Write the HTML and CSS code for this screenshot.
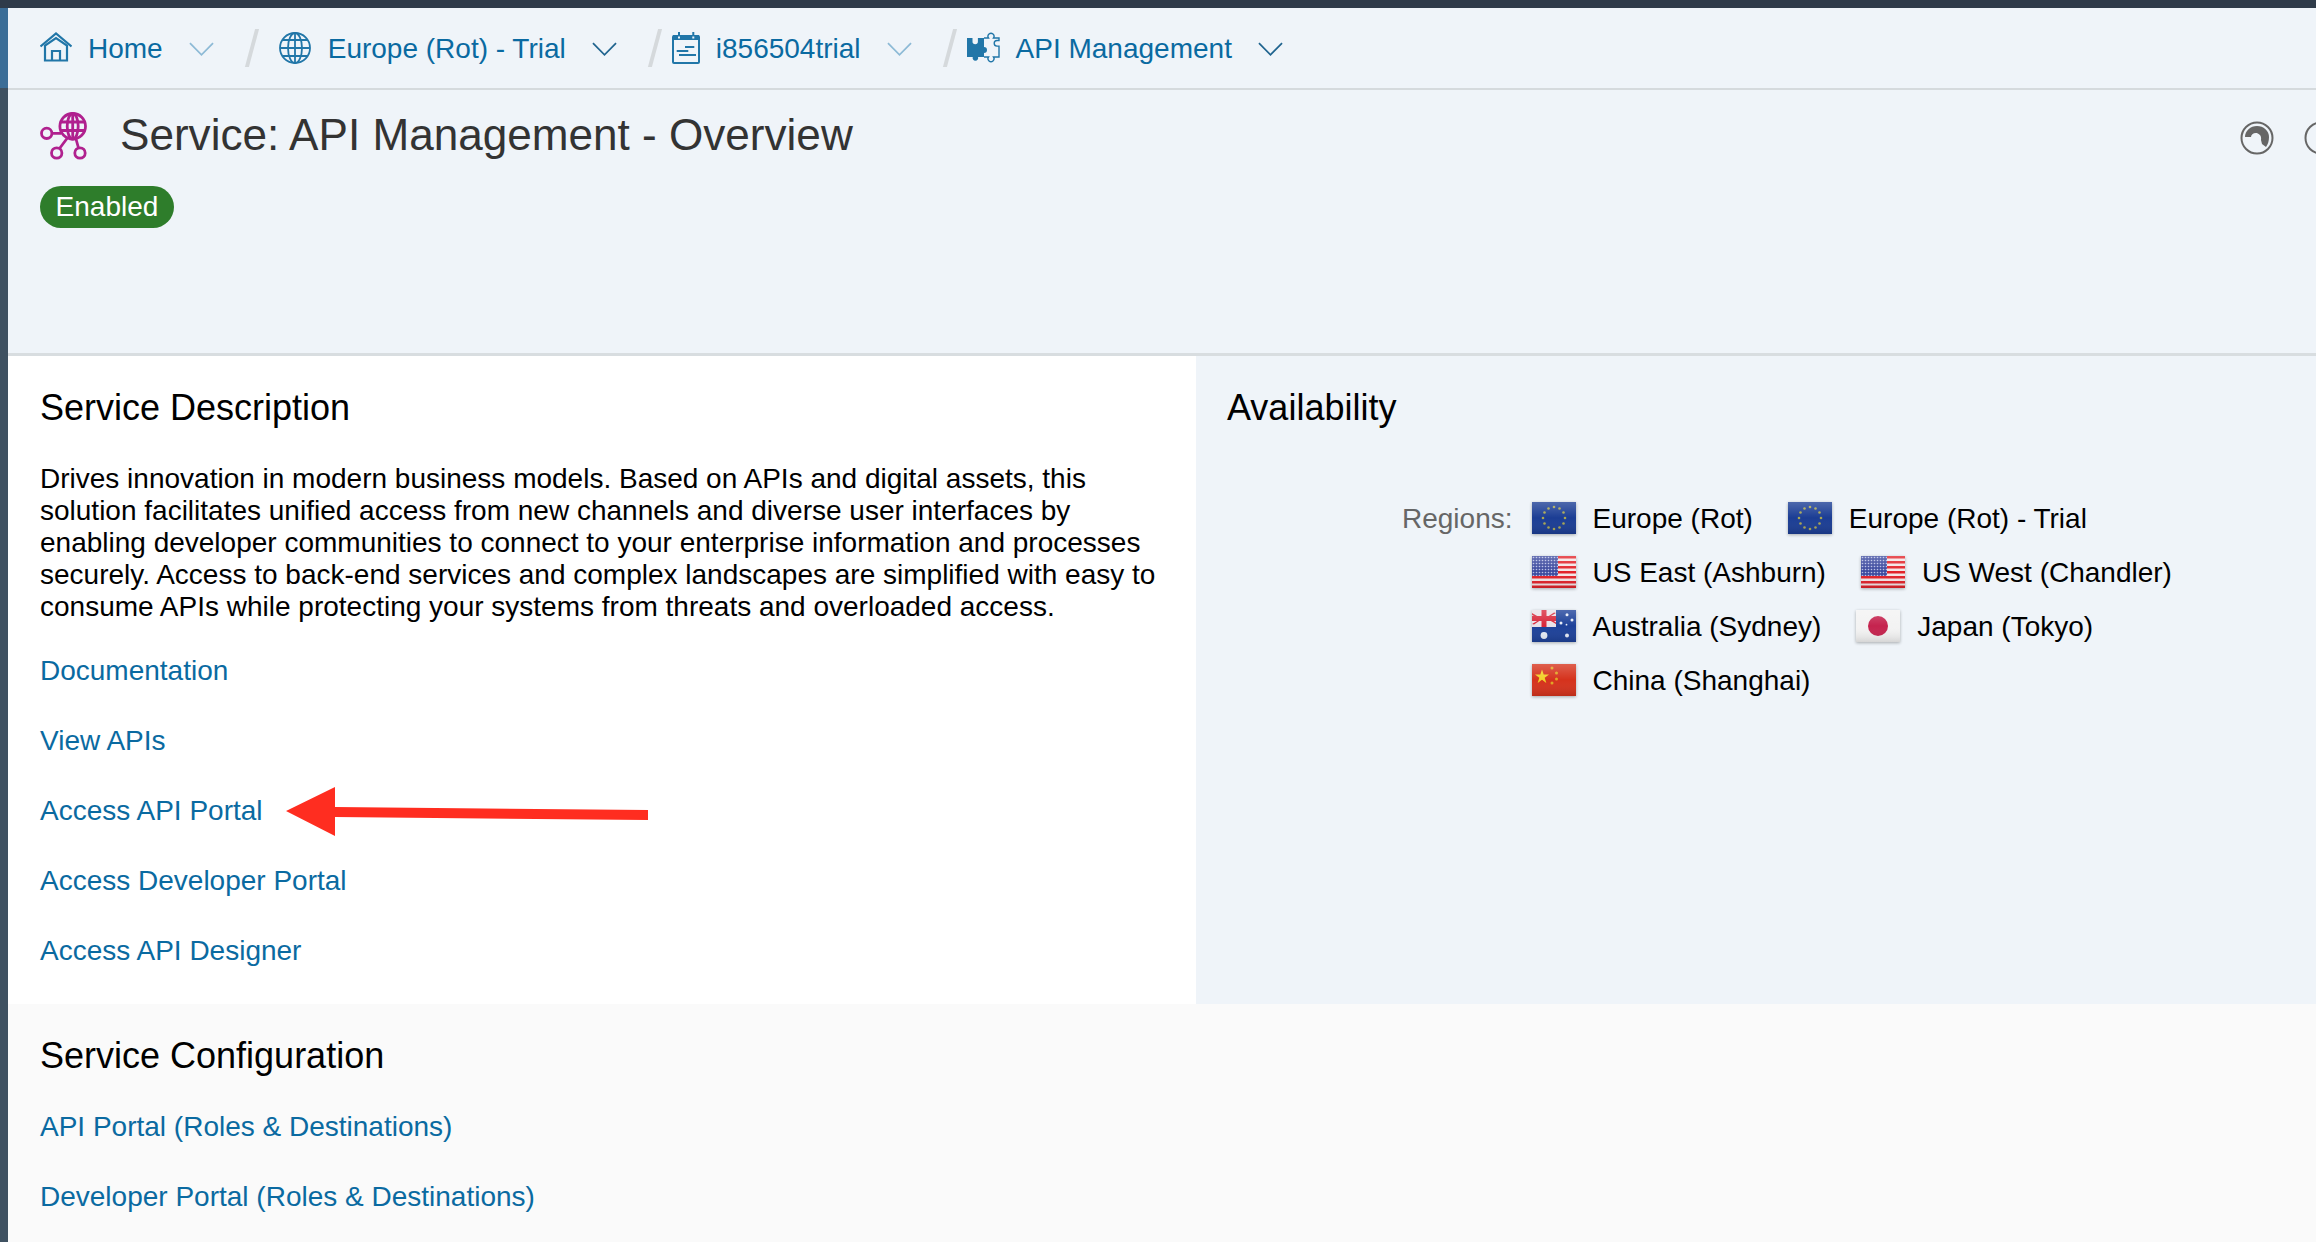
FILE: index.html
```html
<!DOCTYPE html>
<html lang="en">
<head>
  <meta charset="UTF-8" />
  <title>Service: API Management - Overview</title>
  <link rel="stylesheet" href="styles.css">
</head>
<body>
  <svg class="defs" width="0" height="0">
    <defs>
      <linearGradient id="gloss" x1="0" y1="0" x2="0" y2="1">
        <stop offset="0" stop-color="#fff" stop-opacity=".22"/>
        <stop offset=".5" stop-color="#fff" stop-opacity="0"/>
        <stop offset="1" stop-color="#000" stop-opacity=".12"/>
      </linearGradient>
      <pattern id="usdots" width="3" height="3" patternUnits="userSpaceOnUse">
        <rect width="3" height="3" fill="#3c4a9f"/>
        <circle cx="1.5" cy="1.5" r=".8" fill="#b9bfe6"/>
      </pattern>
      <symbol id="flag-eu" viewBox="0 0 44 32">
        <rect width="44" height="32" fill="#1b3d94"/>
        <g fill="#a8a552">
          <circle cx="22" cy="5" r="1.3"/><circle cx="27.5" cy="6.5" r="1.3"/><circle cx="31.5" cy="10.5" r="1.3"/>
          <circle cx="33" cy="16" r="1.3"/><circle cx="31.5" cy="21.5" r="1.3"/><circle cx="27.5" cy="25.5" r="1.3"/>
          <circle cx="22" cy="27" r="1.3"/><circle cx="16.5" cy="25.5" r="1.3"/><circle cx="12.5" cy="21.5" r="1.3"/>
          <circle cx="11" cy="16" r="1.3"/><circle cx="12.5" cy="10.5" r="1.3"/><circle cx="16.5" cy="6.5" r="1.3"/>
        </g>
        <rect width="44" height="32" fill="url(#gloss)"/>
      </symbol>
      <symbol id="flag-us" viewBox="0 0 44 32">
        <rect width="44" height="32" fill="#f4e6e6"/>
        <g fill="#e2232a">
          <rect y="0" width="44" height="2.5"/><rect y="5" width="44" height="2.5"/><rect y="10" width="44" height="2.5"/>
          <rect y="15" width="44" height="2.5"/><rect y="20" width="44" height="2.5"/><rect y="25" width="44" height="2.5"/>
          <rect y="29.5" width="44" height="2.5"/>
        </g>
        <rect width="26" height="20" fill="url(#usdots)"/>
        <rect width="44" height="32" fill="url(#gloss)"/>
      </symbol>
      <symbol id="flag-au" viewBox="0 0 44 32">
        <rect width="44" height="32" fill="#1d4199"/>
        <rect width="24" height="17" fill="#eae2e8"/>
        <path d="M0 3l6 3.500H3L0 5zM24 14l-6-3.500h3l3 2zM24 3l-6 3.500h-2l6-4zM0 14l6-3.500h2l-6 4z" fill="#d8273a"/>
        <rect x="9.500" width="5" height="17" fill="#d8273a"/>
        <rect y="6" width="24" height="5" fill="#d8273a"/>
        <g fill="#e8edf7">
          <circle cx="12" cy="25.500" r="3.400"/><circle cx="35" cy="25.500" r="2"/><circle cx="35" cy="4.700" r="1.500"/>
          <circle cx="29" cy="13" r="1.500"/><circle cx="40" cy="10" r="1.500"/><circle cx="34.500" cy="14.700" r=".9"/>
        </g>
        <rect width="44" height="32" fill="url(#gloss)"/>
      </symbol>
      <symbol id="flag-jp" viewBox="0 0 44 32">
        <rect width="44" height="32" fill="#f3f3f3"/>
        <circle cx="22" cy="16" r="10" fill="#c5234e"/>
        <rect width="44" height="32" fill="url(#gloss)"/>
      </symbol>
      <symbol id="flag-cn" viewBox="0 0 44 32">
        <rect width="44" height="32" fill="#d5321c"/>
        <path d="M10 5.500l1.700 5.100 5.300 0-4.300 3.200 1.600 5.100-4.300-3.100-4.300 3.100 1.600-5.100-4.300-3.200 5.300 0z" fill="#f2d129"/>
        <g fill="#e0a522">
          <circle cx="20" cy="4" r="1.500"/><circle cx="24.500" cy="9" r="1.500"/><circle cx="24.500" cy="15" r="1.500"/><circle cx="20" cy="19" r="1.500"/>
        </g>
        <rect width="44" height="32" fill="url(#gloss)"/>
      </symbol>
    </defs>
  </svg>

  <div class="topbar"></div>
  <div class="frame">
    <div class="rail"><div class="rail-top"></div></div>
    <div class="main">
      <nav class="crumbs">
        <svg class="crumb-icon home" viewBox="0 0 32 32" fill="none" stroke="#2176a8" stroke-width="2.200">
          <path d="M.5 14.500L16 1.500l15.500 13"/>
          <path d="M5 28.500v-15L16 6l11 7.500v15zM12 28.500v-9.500h8v9.500"/>
        </svg>
        <a class="crumb-text">Home</a>
        <svg class="chev chev-light" viewBox="0 0 26 14" fill="none" stroke-width="1.800"><path d="M1 1l12 12L25 1"/></svg>
        <span class="slash"></span>

        <svg class="crumb-icon globe" viewBox="0 0 32 32" fill="none" stroke="#2176a8" stroke-width="1.800">
          <circle cx="16" cy="16" r="15"/><ellipse cx="16" cy="16" rx="7" ry="15"/>
          <path d="M16 1v30M1 16h30M3.500 8h25M3.500 24h25"/>
        </svg>
        <a class="crumb-text">Europe (Rot) - Trial</a>
        <svg class="chev" viewBox="0 0 26 14" fill="none" stroke-width="1.800"><path d="M1 1l12 12L25 1"/></svg>
        <span class="slash"></span>

        <svg class="crumb-icon cal" viewBox="0 0 28 32" fill="none" stroke="#2176a8" stroke-width="2">
          <rect x="1" y="4" width="26" height="27" rx="1"/>
          <rect x="1" y="3" width="26" height="5" fill="#2176a8" stroke="none"/>
          <path d="M7 0v3M21.300 0v3M13 15h9.300M4.700 19h11.600M7 23h17"/>
          <path d="M6 4.500h2v2H6zM20.300 4.500h2v2h-2z" fill="#eff4f9" stroke="none"/>
        </svg>
        <a class="crumb-text">i856504trial</a>
        <svg class="chev chev-light" viewBox="0 0 26 14" fill="none" stroke-width="1.800"><path d="M1 1l12 12L25 1"/></svg>
        <span class="slash"></span>

        <svg class="crumb-icon puzzle" viewBox="0 0 33 32">
          <path d="M0 6h5.500v3.500a2.700 2.700 0 0 0 5.400 0V6H17v9a3 3 0 1 1 0 6v4H11a2.800 2.800 0 1 1-5.200 0H0z" fill="#2176a8"/>
          <path d="M17 6h4.500a3 3 0 1 1 5 0H32v2.500h-2a2.800 2.800 0 1 0 0 5.600h2V25h-5.500a3 3 0 1 1-5 0H17" fill="none" stroke="#2176a8" stroke-width="1.400"/>
        </svg>
        <a class="crumb-text">API Management</a>
        <svg class="chev" viewBox="0 0 26 14" fill="none" stroke-width="1.800"><path d="M1 1l12 12L25 1"/></svg>
      </nav>

      <header class="page-head">
        <div class="title-row">
          <svg class="service-icon" viewBox="0 0 48 48" fill="none" stroke="#b0218f" stroke-width="2.800">
            <circle cx="32.700" cy="14.300" r="12.800"/><ellipse cx="32.700" cy="14.300" rx="5.500" ry="12.800"/>
            <path d="M32.700 1.500v25.600M20.500 10h24.400M20.500 18.500h24.400"/>
            <circle cx="6.700" cy="21.300" r="5.200"/><circle cx="16.700" cy="41" r="5.200"/><circle cx="40" cy="41" r="5.200"/>
            <path d="M12 21.300h9M19.500 36.500l7.500-10M38.500 36l-2.500-9"/>
          </svg>
          <h1>Service: API Management - Overview</h1>
          <div class="head-tools">
            <svg class="tool" viewBox="0 0 34 34">
              <circle cx="17" cy="17" r="15.500" fill="none" stroke="#666" stroke-width="2"/>
              <path d="M5 16a12 11 0 0 1 24 0c0 4-1 7-3 10l-4-3-1-4c1-5-3-7-5-7-3 0-5 2-5 4z" fill="#666"/>
            </svg>
            <svg class="tool" viewBox="0 0 34 34">
              <circle cx="17" cy="17" r="15.500" fill="none" stroke="#666" stroke-width="2"/>
              <circle cx="17" cy="10" r="2" fill="#666"/>
            </svg>
          </div>
        </div>
        <span class="badge">Enabled</span>
      </header>

      <div class="panels">
        <section class="panel-desc">
          <h2>Service Description</h2>
          <p class="desc">Drives innovation in modern business models. Based on APIs and digital assets, this<br>solution facilitates unified access from new channels and diverse user interfaces by<br>enabling developer communities to connect to your enterprise information and processes<br>securely. Access to back-end services and complex landscapes are simplified with easy to<br>consume APIs while protecting your systems from threats and overloaded access.</p>
          <ul class="links">
            <li><a>Documentation</a></li>
            <li><a>View APIs</a></li>
            <li><a>Access API Portal</a></li>
            <li><a>Access Developer Portal</a></li>
            <li><a>Access API Designer</a></li>
          </ul>
          <svg class="arrow" viewBox="0 0 362 49" width="362" height="49">
            <path d="M0 24L49 0v20l313 3v10L49 30v19z" fill="#ff2d20"/>
          </svg>
        </section>
        <section class="panel-avail">
          <h2>Availability</h2>
          <div class="regions">
            <span class="regions-label">Regions:</span>
            <div class="region-rows">
              <div class="region-row">
                <span class="region"><svg class="flag"><use href="#flag-eu"/></svg>Europe (Rot)</span>
                <span class="region"><svg class="flag"><use href="#flag-eu"/></svg>Europe (Rot) - Trial</span>
              </div>
              <div class="region-row">
                <span class="region"><svg class="flag"><use href="#flag-us"/></svg>US East (Ashburn)</span>
                <span class="region"><svg class="flag"><use href="#flag-us"/></svg>US West (Chandler)</span>
              </div>
              <div class="region-row">
                <span class="region"><svg class="flag"><use href="#flag-au"/></svg>Australia (Sydney)</span>
                <span class="region"><svg class="flag"><use href="#flag-jp"/></svg>Japan (Tokyo)</span>
              </div>
              <div class="region-row">
                <span class="region"><svg class="flag"><use href="#flag-cn"/></svg>China (Shanghai)</span>
              </div>
            </div>
          </div>
        </section>
      </div>

      <section class="config">
        <h2>Service Configuration</h2>
        <ul class="links">
          <li><a>API Portal (Roles &amp; Destinations)</a></li>
          <li><a>Developer Portal (Roles &amp; Destinations)</a></li>
        </ul>
      </section>
    </div>
  </div>
</body>
</html>
```

FILE: styles.css
```css
html, body {
  height: 100%;
  margin: 0;
  overflow: hidden;
}
body {
  font-family: "Liberation Sans", Arial, sans-serif;
  background: #eff4f9;
  color: #000;
  display: flex;
  flex-direction: column;
}
h1, h2, p, ul {
  margin: 0;
  padding: 0;
}
ul {
  list-style: none;
}
a {
  color: #0a6aa1;
}
.defs {
  position: absolute;
}
.topbar {
  height: 8px;
  background: #2f3b4a;
  flex: none;
}
.frame {
  flex: 1;
  display: flex;
  min-height: 0;
}
.rail {
  width: 8px;
  flex: none;
  background: #3f5161;
}
.rail-top {
  height: 80px;
  background: #3b6d97;
}
.main {
  flex: 1;
  min-width: 0;
  display: flex;
  flex-direction: column;
  overflow: hidden;
}

/* breadcrumb */
.crumbs {
  height: 80px;
  flex: none;
  box-sizing: content-box;
  border-bottom: 2px solid #d5dadd;
  display: flex;
  align-items: center;
  padding-left: 32px;
  font-size: 28px;
}
.crumb-icon {
  flex: none;
  height: 32px;
  margin-right: 16px;
}
.crumb-icon.home { width: 32px; }
.crumb-icon.globe { width: 32px; margin-left: 11px; margin-right: 17px; }
.crumb-icon.cal { width: 28px; margin-left: 1px; }
.crumb-icon.puzzle { width: 33px; margin-left: 1px; }
.crumb-text {
  white-space: nowrap;
  padding-top: 2px;
}
.chev {
  width: 25px;
  height: 14px;
  margin: 2px 36px 0 26px;
  stroke: #20648f;
  flex: none;
}
.chev-light {
  stroke: #8dbad6;
}
.slash {
  width: 4px;
  height: 38px;
  background: #d5d9dc;
  transform: skewX(-15deg);
  margin-right: 14px;
  flex: none;
}

/* page header */
.page-head {
  height: 266px;
  flex: none;
  border-bottom: 3px solid #d8dde0;
  padding: 22px 0 0 32px;
  box-sizing: border-box;
}
.title-row {
  display: flex;
  align-items: center;
  height: 48px;
}
.service-icon {
  width: 48px;
  height: 48px;
  flex: none;
  margin-right: 32px;
}
h1 {
  font-size: 44.100px;
  font-weight: normal;
  color: #333;
  white-space: nowrap;
  padding-bottom: 3px;
}
.head-tools {
  margin-left: auto;
  margin-top: 4px;
  display: flex;
  gap: 30px;
  margin-right: -22px;
}
.tool {
  width: 34px;
  height: 34px;
  flex: none;
}
.badge {
  display: inline-block;
  margin-top: 26px;
  height: 42px;
  line-height: 41px;
  width: 134px;
  text-align: center;
  background: #2e7d2b;
  color: #fff;
  font-size: 28px;
  border-radius: 21px;
}

/* panels */
.panels {
  height: 648px;
  flex: none;
  display: flex;
}
.panel-desc {
  position: relative;
  width: 1188px;
  flex: none;
  background: #fff;
  box-sizing: border-box;
  padding: 32px 0 0 32px;
}
.panel-avail {
  flex: 1;
  padding: 32px 0 0 31px;
}
h2 {
  font-size: 36px;
  font-weight: normal;
  line-height: 40px;
}
.desc {
  margin-top: 35px;
  font-size: 28px;
  line-height: 32px;
  white-space: nowrap;
}
.links {
  font-size: 28px;
}
.links li {
  height: 70px;
  line-height: 40px;
  white-space: nowrap;
}
.panel-desc .links {
  margin-top: 28px;
}
.arrow {
  position: absolute;
  left: 278px;
  top: 431px;
}

/* availability */
.regions {
  display: flex;
  margin: 74px 0 0 175px;
  font-size: 28px;
}
.regions-label {
  color: #666;
  line-height: 34px;
  margin-right: 19px;
}
.region-row {
  display: flex;
  height: 54px;
  gap: 35px;
}
.region {
  display: flex;
  align-items: flex-start;
  line-height: 34px;
  white-space: nowrap;
}
.flag {
  width: 44px;
  height: 32px;
  flex: none;
  margin-right: 17px;
  box-shadow: 0 1px 3px rgba(0, 0, 0, .3);
  filter: blur(.4px);
}

/* configuration */
.config {
  flex: 1;
  background: #fafafa;
  padding: 32px 0 0 32px;
}
.config .links {
  margin-top: 31px;
}
```
